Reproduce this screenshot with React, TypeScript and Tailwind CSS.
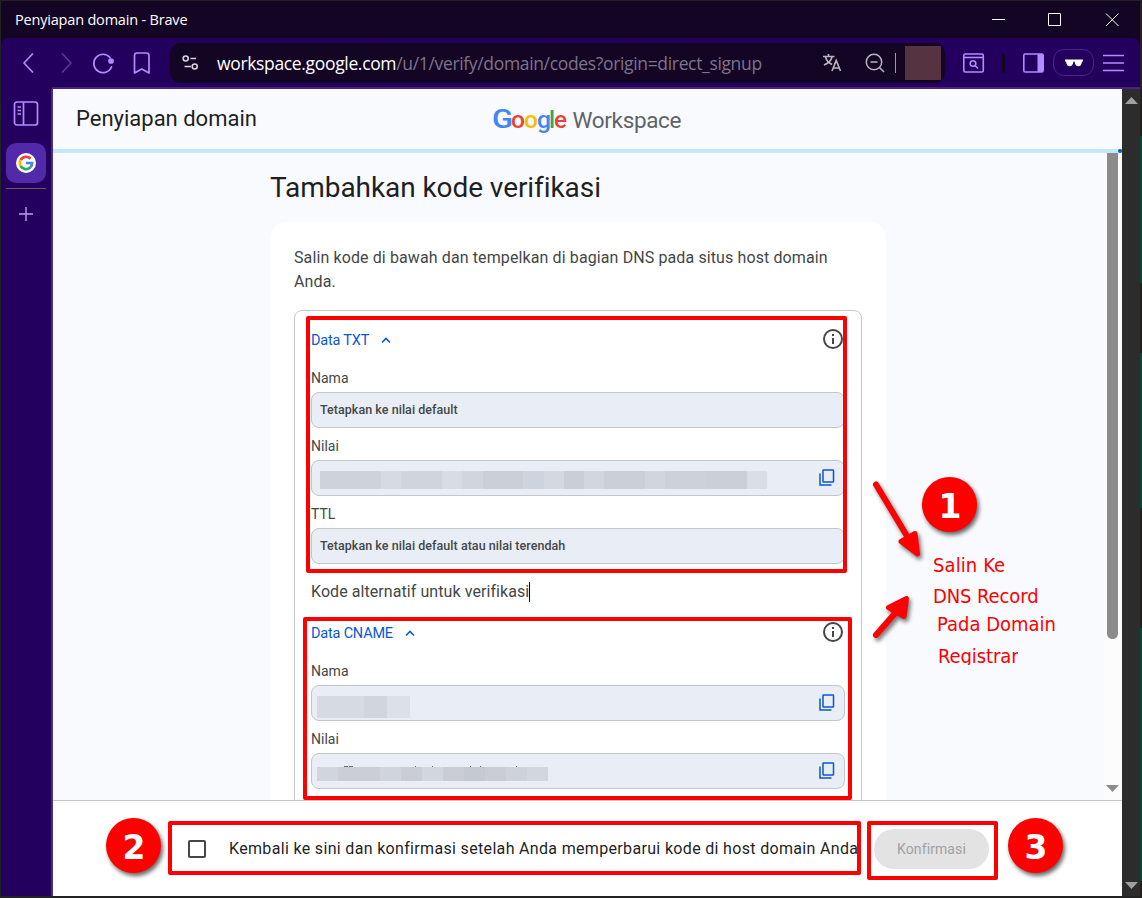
import type { ReactNode } from "react";
import clsx from "clsx";

const googleFont = "font-['Roboto',sans-serif]";
const systemFont = "font-['Open_Sans','Noto_Sans',sans-serif]";

function TitleBar() {
  return (
    <div className="flex h-[37px] items-center bg-[#140524] text-white">
      <span className="ml-3.5 flex-1 text-[14.5px] tracking-[-0.19px]">
        Penyiapan domain - Brave
      </span>
      <svg width="148" height="37" fill="none" stroke="#fff" strokeWidth="1">
        <path d="M0 18.5h13" />
        <path d="M56.5 12.5h12v12h-12z" />
        <path d="M114 12.5l12.5 12.5M126.5 12.5L114 25" />
      </svg>
    </div>
  );
}

function AddressBar() {
  return (
    <div className="ml-[17px] flex h-10 w-[775px] items-center rounded-[10px] bg-[#140524]">
      <svg
        className="ml-3"
        width="18"
        height="18"
        fill="none"
        stroke="#d8d2e0"
        strokeWidth="1.6"
      >
        <circle cx="3.7" cy="4.5" r="2.5" />
        <path d="M8.5 4.5H14M2.5 12.5H9" />
        <circle cx="12.7" cy="12.5" r="2.5" />
      </svg>
      <span className="ml-[17px] flex-1 whitespace-nowrap pt-px text-[17.5px] tracking-[-0.34px] text-[#7d748c]">
        <span className="text-white">workspace.google.com</span>
        /u/1/verify/domain/codes?origin=direct_signup
      </span>
      <svg
        width="20"
        height="20"
        fill="none"
        stroke="#b9b3c2"
        strokeWidth="1.6"
      >
        <path d="M1 3.5h11.5M6.5 1v2.5M3.5 4c1 4 3.5 6 6.5 7.5M10 4c-1 4-4 6.5-8 8" />
        <path d="M10 18l4.2-10.5L18.5 18M11.3 15h6" />
      </svg>
      <svg
        className="ml-[23px]"
        width="20"
        height="20"
        fill="none"
        stroke="#b9b3c2"
        strokeWidth="1.5"
      >
        <circle cx="9" cy="9" r="7.7" />
        <path d="M5.5 9h7M14.5 14.5l4.5 4.5" />
      </svg>
      <span className="ml-2.5 h-5 w-px bg-[#9d97a6]" />
      <span className="ml-[9px] mr-1 h-[34px] w-9 bg-[#553340]" />
    </div>
  );
}

function Toolbar() {
  return (
    <div className="flex h-[49px] items-center rounded-t-lg bg-[#24005e]">
      <svg
        className="ml-4"
        width="136"
        height="24"
        fill="none"
        stroke="#b18cff"
        strokeWidth="1.7"
        strokeLinecap="round"
        strokeLinejoin="round"
      >
        <path d="M15.5 3L7 12l8.5 9" />
        <path d="M45.5 3l8.5 9-8.5 9" stroke="#5b359f" />
        <path d="M93 6.5A9.2 9.2 0 1 0 94.5 16" />
        <path d="M94 8a2 2 0 1 1 0 4a2 2 0 0 1 0-4" fill="#b18cff" />
        <path d="M117.5 4.5q0-2.5 2.5-2.5h9.500q2.500 0 2.500 2.500V22l-7.200-4-7.300 4z" />
      </svg>
      <AddressBar />
      <svg
        className="ml-[18px]"
        width="22"
        height="20"
        fill="none"
        stroke="#b18cff"
        strokeWidth="1.6"
      >
        <rect x=".8" y="1" width="19.5" height="18" rx="1.5" />
        <path d="M1 4.5h19" />
        <circle cx="10" cy="10.5" r="2.8" />
        <path d="M12 12.5l3 3" />
      </svg>
      <span className="ml-[17px] h-5 w-[3px] rounded bg-[#140524]" />
      <svg className="ml-[18px]" width="21" height="20">
        <rect
          x=".8"
          y="1"
          width="19.4"
          height="18"
          rx="1.5"
          fill="none"
          stroke="#b18cff"
          strokeWidth="1.6"
        />
        <path d="M14.5 1h5.5v18h-5.5z" fill="#b18cff" />
      </svg>
      <span className="ml-[9px] flex h-[27px] w-[41px] items-center justify-center rounded-[11px] border border-[#4a2290]">
        <svg width="18" height="8" fill="#fff">
          <path d="M0 .5h18v2h-1l-.6 2.400q-.6 2.300-3 2.300-2.500 0-3.200-2.300L9.500 2.500h-1l-.7 2.400Q7 7.200 4.600 7.200 2.200 7.200 1.600 4.900L1 2.500H0z" />
        </svg>
      </span>
      <svg
        className="ml-[9px]"
        width="21"
        height="20"
        stroke="#b18cff"
        strokeWidth="1.6"
      >
        <path d="M0 2.5h21M0 10h21M0 17.5h21" />
      </svg>
    </div>
  );
}

function SideBar() {
  return (
    <aside className="flex w-[52px] shrink-0 flex-col items-center border-r-2 border-[#4b3077] bg-[#24005e]">
      <svg
        className="mt-3"
        width="26"
        height="26"
        fill="none"
        stroke="#b18cff"
        strokeWidth="1.7"
      >
        <rect x="1.5" y="1" width="23" height="23" rx="2.5" />
        <path d="M10.5 1v23M4.500 6H8M4.500 9.500H8M4.500 13H8" />
      </svg>
      <span className="mt-4 flex size-10 items-center justify-center rounded-[10px] bg-[#5229a8]">
        <svg width="20" height="20">
          <circle cx="10" cy="10" r="10" fill="#fff" />
          <g fill="none" strokeWidth="2.7">
            <path d="M4.6 7A6.2 6.2 0 0 1 14.5 5.7" stroke="#ea4335" />
            <path d="M4.6 13A6.2 6.2 0 0 1 4.6 7" stroke="#fbbc05" />
            <path d="M14.2 14.5A6.2 6.2 0 0 1 4.6 13" stroke="#34a853" />
            <path d="M10 10h6.1A6.2 6.2 0 0 1 14.2 14.5" stroke="#4285f4" />
          </g>
        </svg>
      </span>
      <span className="mt-[5px] h-px w-10 bg-[#686058]" />
      <svg
        className="mt-[18px]"
        width="14"
        height="14"
        stroke="#b9a1ee"
        strokeWidth="1.4"
      >
        <path d="M7 0v14M0 7h14" />
      </svg>
    </aside>
  );
}

function WorkspaceLogo() {
  const letters = [
    { char: "G", x: -1, width: 21, color: "#4285f4" },
    { char: "o", x: 18, width: 14, color: "#ea4335" },
    { char: "o", x: 31, width: 14, color: "#fbbc05" },
    { char: "g", x: 44, width: 14, color: "#4285f4" },
    { char: "l", x: 56, width: 6, color: "#34a853" },
    { char: "e", x: 61, width: 13, color: "#ea4335" },
  ];

  return (
    <svg width="190" height="32" className={clsx("overflow-visible", googleFont)}>
      {letters.map((letter) => (
        <text
          key={letter.x}
          x={letter.x}
          y="24.5"
          fontSize={letter.char === "G" ? 25.5 : 24}
          fontWeight="500"
          fill={letter.color}
          textLength={letter.width}
          lengthAdjust="spacingAndGlyphs"
        >
          {letter.char}
        </text>
      ))}
      <text x="79.5" y="24.5" fontSize="22.5" fill="#5f6368" textLength="109">
        Workspace
      </text>
    </svg>
  );
}

function CopyIcon() {
  return (
    <svg
      className="-mt-px"
      width="16"
      height="17"
      fill="none"
      stroke="#0b57d0"
      strokeWidth="1.5"
    >
      <rect x="4" y="1" width="10.5" height="12" rx=".6" />
      <path d="M1 4.5V16h11.5" />
    </svg>
  );
}

function InfoIcon() {
  return (
    <svg className="mr-0.5" width="20" height="20">
      <circle
        cx="10"
        cy="10"
        r="9"
        fill="none"
        stroke="#444746"
        strokeWidth="2"
      />
      <path d="M9 5h2v2H9zM9 9h2v6H9z" fill="#444746" />
    </svg>
  );
}

function RecordHeader({ title }: { title: string }) {
  return (
    <div className="flex h-5 items-center text-[14.5px] tracking-[-0.2px] text-[#0b57d0]">
      <span className="pt-[3px]">{title}</span>
      <svg
        className="ml-3 mr-auto mt-0.5"
        width="10"
        height="8"
        fill="none"
        stroke="#0b57d0"
        strokeWidth="1.6"
      >
        <path d="M1 6.5l4-4 4 4" />
      </svg>
      <InfoIcon />
    </div>
  );
}

type FieldProps = {
  label: string;
  copy?: boolean;
  children: ReactNode;
};

function Field({ label, copy, children }: FieldProps) {
  return (
    <div className="mb-2">
      <div className="h-6 text-sm leading-5 text-[#444746]">{label}</div>
      <div className="flex h-9 items-center rounded-lg border border-[#c4c7c5] bg-[#e8edf6] pr-[9px]">
        <div className="flex-1">{children}</div>
        {copy && <CopyIcon />}
      </div>
    </div>
  );
}

function FieldText({ children }: { children: ReactNode }) {
  return (
    <span className="block pl-2 text-[12.5px] font-medium tracking-[0.04px] text-[#444746]">
      {children}
    </span>
  );
}

function TxtRecord() {
  return (
    <section>
      <RecordHeader title="Data TXT" />
      <div className="h-[19px]" />
      <Field label="Nama">
        <FieldText>Tetapkan ke nilai default</FieldText>
      </Field>
      <Field label="Nilai" copy>
        <div className="ml-2 mt-1 flex h-[18px]">
          <span className="w-[61px] bg-[#ced2db]" />
          <span className="w-5 bg-[#d6dae3]" />
          <span className="w-[41px] bg-[#d0d4dd]" />
          <span className="w-5 bg-[#d8dce5]" />
          <span className="w-[21px] bg-[#d1d5de]" />
          <span className="w-10 bg-[#cbcfd8]" />
          <span className="w-[21px] bg-[#cdd4de]" />
          <span className="w-5 bg-[#d5d8e1]" />
          <span className="w-5 bg-[#cbced7]" />
          <span className="w-5 bg-[#d2d6df]" />
          <span className="w-[41px] bg-[#cbcfd8]" />
          <span className="w-5 bg-[#d1d5de]" />
          <span className="w-[41px] bg-[#cdd1da]" />
          <span className="w-[41px] bg-[#cbcfd8]" />
          <span className="w-5 bg-[#dadee7]" />
        </div>
      </Field>
      <Field label="TTL">
        <FieldText>Tetapkan ke nilai default atau nilai terendah</FieldText>
      </Field>
    </section>
  );
}

function CnameRecord() {
  return (
    <section>
      <RecordHeader title="Data CNAME" />
      <div className="h-[19px]" />
      <Field label="Nama" copy>
        <div className="ml-[5px] mt-2 flex h-[22px]">
          <span className="w-[47px] bg-[#d6dae2]" />
          <span className="w-[23px] bg-[#d1d5de]" />
          <span className="w-[23px] bg-[#dce0e9]" />
        </div>
      </Field>
      <Field label="Nilai" copy>
        <svg className="ml-[5px] mt-1.5" width="232" height="16">
          <path
            d="M27 .5h4M32 .5h4M98 .5h1M115 .5h1M153 .5h1M163 .5h1M199 .5h1"
            stroke="#6b6e72"
          />
          <g>
            <rect y="1" width="21" height="14" fill="#d1d5de" />
            <rect x="21" y="1" width="42" height="14" fill="#cbced7" />
            <rect x="63" y="1" width="21" height="14" fill="#d0d4dd" />
            <rect x="84" y="1" width="21" height="14" fill="#cacdd6" />
            <rect x="105" y="1" width="21" height="14" fill="#d2d6de" />
            <rect x="126" y="1" width="21" height="14" fill="#cacdd6" />
            <rect x="147" y="1" width="21" height="14" fill="#c5c9d1" />
            <rect x="168" y="1" width="21" height="14" fill="#cacdd6" />
            <rect x="189" y="1" width="21" height="14" fill="#ced3db" />
            <rect x="210" y="1" width="21" height="14" fill="#d2d6df" />
          </g>
        </svg>
      </Field>
    </section>
  );
}

function VerificationPage() {
  return (
    <div className="flex h-[647px] overflow-hidden">
      <div className="flex-1 bg-[#f8fafe] pl-[217px]">
        <h1 className="h-[69px] pt-[17px] text-[28px] leading-9 tracking-[-0.07px] text-[#1f1f1f]">
          Tambahkan kode verifikasi
        </h1>
        <div className="h-[600px] w-[616px] rounded-t-2xl bg-white px-6 pt-6">
          <p className="text-base leading-6 tracking-[0.11px] text-[#444746]">
            Salin kode di bawah dan tempelkan di bagian DNS pada situs host
            domain
            <br />
            Anda.
          </p>
          <div className="mt-4 h-[520px] w-[568px] rounded-t-lg border border-[#c4c7c5] px-4 pt-[18px]">
            <TxtRecord />
            <div className="flex h-[50px] pt-2 text-base leading-6 tracking-[0.07px] text-[#444746]">
              Kode alternatif untuk verifikasi
              <span className="mt-0.5 h-5 w-px bg-black" />
            </div>
            <CnameRecord />
          </div>
        </div>
      </div>
      <div className="flex w-[18px] flex-col justify-between bg-[#fcfcfc]">
        <span className="ml-[3px] h-[486px] w-[11px] rounded-b-full bg-[#8b8b8b]" />
        <svg
          className="mb-2 ml-0.5"
          width="13"
          height="7"
          fill="#8b8b8b"
        >
          <path d="M0 0h13L6.5 7z" />
        </svg>
      </div>
    </div>
  );
}

function Footer() {
  return (
    <footer className="flex h-24 items-center border-t border-[#c4c7c5] bg-white">
      <span className="ml-[135px] size-[18px] rounded-[2px] border-2 border-[#444746]" />
      <span className="ml-[23px] w-[645px] whitespace-nowrap text-base tracking-[0.33px] text-[#1f1f1f]">
        Kembali ke sini dan konfirmasi setelah Anda memperbarui kode di host
        domain Anda
      </span>
      <button className="h-10 w-[115px] rounded-full bg-[#e3e3e3] pt-0.5 text-[14px] tracking-[0.1px] text-[#a1a1a1]">
        Konfirmasi
      </button>
    </footer>
  );
}

function Marker({ value, className }: { value: number; className: string }) {
  return (
    <span
      className={clsx(
        "absolute flex size-[55px] items-center justify-center rounded-full bg-[#fe0000] pl-px pt-1 font-['DejaVu_Sans',sans-serif] text-[33px] font-bold text-white shadow-[2px_3px_4px_rgba(0,0,0,0.6)]",
        className,
      )}
    >
      {value}
    </span>
  );
}

function Annotations() {
  const frame = "absolute rounded-[2px] border-4 border-[#fe0000]";
  const note = "absolute whitespace-nowrap leading-6";

  return (
    <div className="pointer-events-none absolute inset-0">
      <div className={clsx(frame, "left-[306px] top-[316px] h-[257px] w-[541px]")} />
      <div className={clsx(frame, "left-[303px] top-[617px] h-[183px] w-[549px]")} />
      <div className={clsx(frame, "left-[168px] top-[821px] h-[54px] w-[693px]")} />
      <div className={clsx(frame, "left-[867px] top-[821px] h-[59px] w-[131px]")} />
      <Marker value={1} className="left-[922px] top-[477px]" />
      <Marker value={2} className="left-[106px] top-[818px]" />
      <Marker value={3} className="left-[1008px] top-[818px]" />
      <svg
        className="absolute left-[860px] top-[470px] drop-shadow-[2px_3px_2px_rgba(0,0,0,0.55)]"
        width="80"
        height="180"
        fill="#fe0000"
        stroke="#fe0000"
        strokeLinecap="round"
        strokeLinejoin="round"
      >
        <path d="M16 14.5L50 71" strokeWidth="6" />
        <path d="M41 71.5L55 63.5 57.5 84z" strokeWidth="5" />
        <path d="M16 165L37 141" strokeWidth="6" />
        <path d="M28.5 137.5L46.5 128.5 44 146.5z" strokeWidth="5" />
      </svg>
      <div className="font-['DejaVu_Sans_Condensed','DejaVu_Sans',sans-serif] text-[20px] font-stretch-condensed text-[#fe0000]">
        <span className={clsx(note, "left-[933px] top-[553px] tracking-[0.1px]")}>
          Salin Ke
        </span>
        <span className={clsx(note, "left-[933px] top-[584px] tracking-[-0.1px]")}>
          DNS Record
        </span>
        <span className={clsx(note, "left-[937px] top-[612px]")}>Pada Domain</span>
        <span className={clsx(note, "left-[938px] top-[644px] h-[21px] overflow-hidden tracking-[-0.1px]")}>
          Registrar
        </span>
      </div>
    </div>
  );
}

// Sliver of the editor window that shows past the browser's right edge
function DesktopEdge() {
  return (
    <div className="absolute right-0 top-0 flex h-full w-0.5 flex-col bg-[#232220] pt-[136px]">
      <span className="h-[147px] bg-[#0b4535]" />
      <span className="mt-[70px] h-[155px] bg-[#0b4535]" />
      <span className="mt-[120px] h-[253px] bg-[#0b4535]" />
    </div>
  );
}

export default function App() {
  return (
    <div className="relative h-[898px] w-[1142px] overflow-hidden bg-[#232323] pl-px pr-0.5 pt-px">
      <div className={clsx("flex flex-col bg-[#140524]", systemFont)}>
        <TitleBar />
        <Toolbar />
        <div className="flex h-0.5 bg-[#24005e]">
          <span className="ml-[51px] flex-1 bg-[#4b2183]" />
        </div>
      </div>
      <div className="flex h-[807px]">
        <SideBar />
        <main className={clsx("flex-1", googleFont)}>
          <header className="flex h-[60px] items-center bg-[#f8fafe] pl-[23px]">
            <span className="w-[417px] pb-0.5 text-[22px] text-[#1f1f1f]">
              Penyiapan domain
            </span>
            <WorkspaceLogo />
          </header>
          <div className="flex h-1 items-center justify-end bg-[#c2e7ff]">
            <span className="size-1 rounded-full bg-[#0b57d0]" />
          </div>
          <VerificationPage />
          <Footer />
        </main>
        <div className="flex w-[18px] flex-col items-center justify-between bg-[#2c2c2c] pb-[7px] pt-2">
          <svg width="13" height="7" fill="#a0a0a0">
            <path d="M0 7h13L6.5 0z" />
          </svg>
          <svg width="13" height="7" fill="#a0a0a0">
            <path d="M0 0h13L6.5 7z" />
          </svg>
        </div>
      </div>
      <DesktopEdge />
      <Annotations />
    </div>
  );
}
